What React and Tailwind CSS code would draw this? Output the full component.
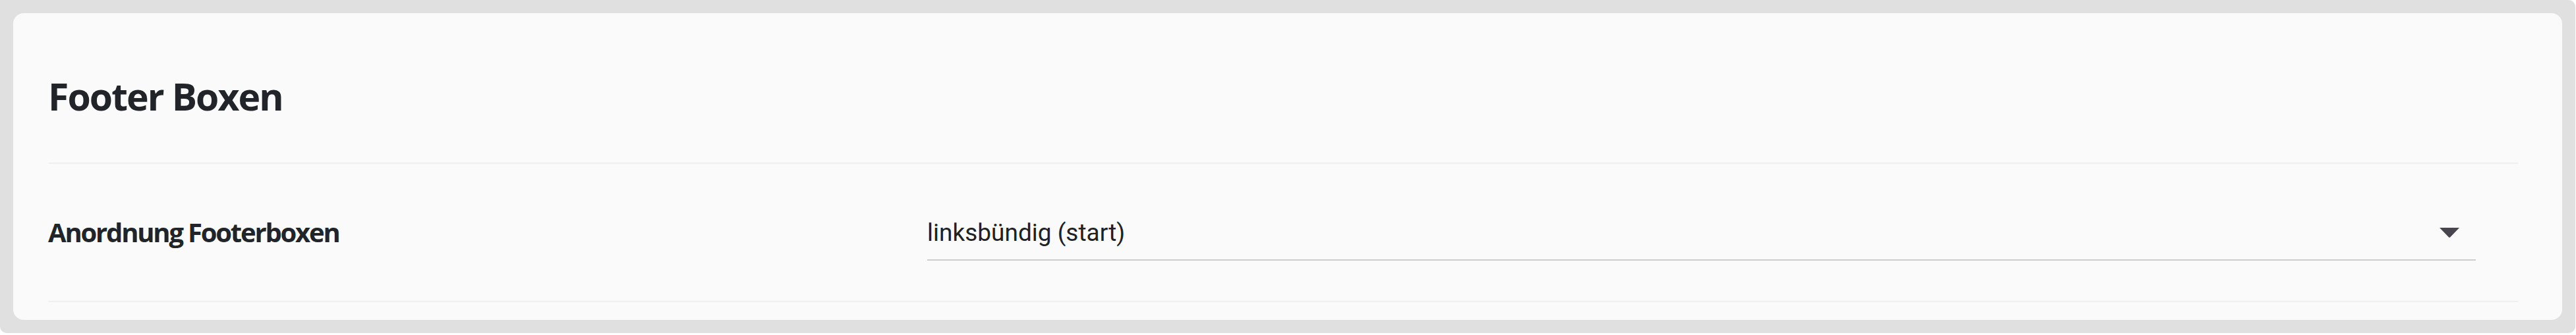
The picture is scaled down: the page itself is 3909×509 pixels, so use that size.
import React from 'react';

const headFont = "font-['Open_Sans','Noto_Sans',sans-serif]";

function SelectField({ value }) {
  return (
    <div className="flex w-[2350px] items-center justify-between border-b-2 border-[#cbcdc9] pt-[15px] pb-[12px] pr-[25px]">
      <span className="font-['Roboto',sans-serif] text-[37px] leading-[57px] text-[#202124]">{value}</span>
      <svg width="30" height="15" viewBox="0 0 30 15" className="text-[#49454f]">
        <path d="M0 0 L30 0 L16 14.5 Q15 15.3 14 14.5 Z" fill="currentColor" />
      </svg>
    </div>
  );
}

export default function App() {
  return (
    <div className="bg-white">
      <div className="w-[3908px] rounded-[10px] rounded-tl-none bg-[#e0e0e0] p-[20px]">
        <div className="rounded-[16px] bg-[#fafafa] pl-[53px] pr-[67px] pt-[86px] pb-[27px]">
          <h2 className={`border-b-2 border-[#efefef] pb-[61px] ${headFont} text-[57px] font-bold leading-[80px] tracking-[-1.9px] text-[#212529]`}>
            Footer Boxen
          </h2>
          <div className="flex h-[210px] items-center border-b-2 border-[#efefef]">
            <div className={`w-[1334px] ${headFont} text-[40px] font-bold tracking-[-2.2px] text-[#212529]`}>
              Anordnung Footerboxen
            </div>
            <SelectField value="linksbündig (start)" />
          </div>
        </div>
      </div>
    </div>
  );
}
